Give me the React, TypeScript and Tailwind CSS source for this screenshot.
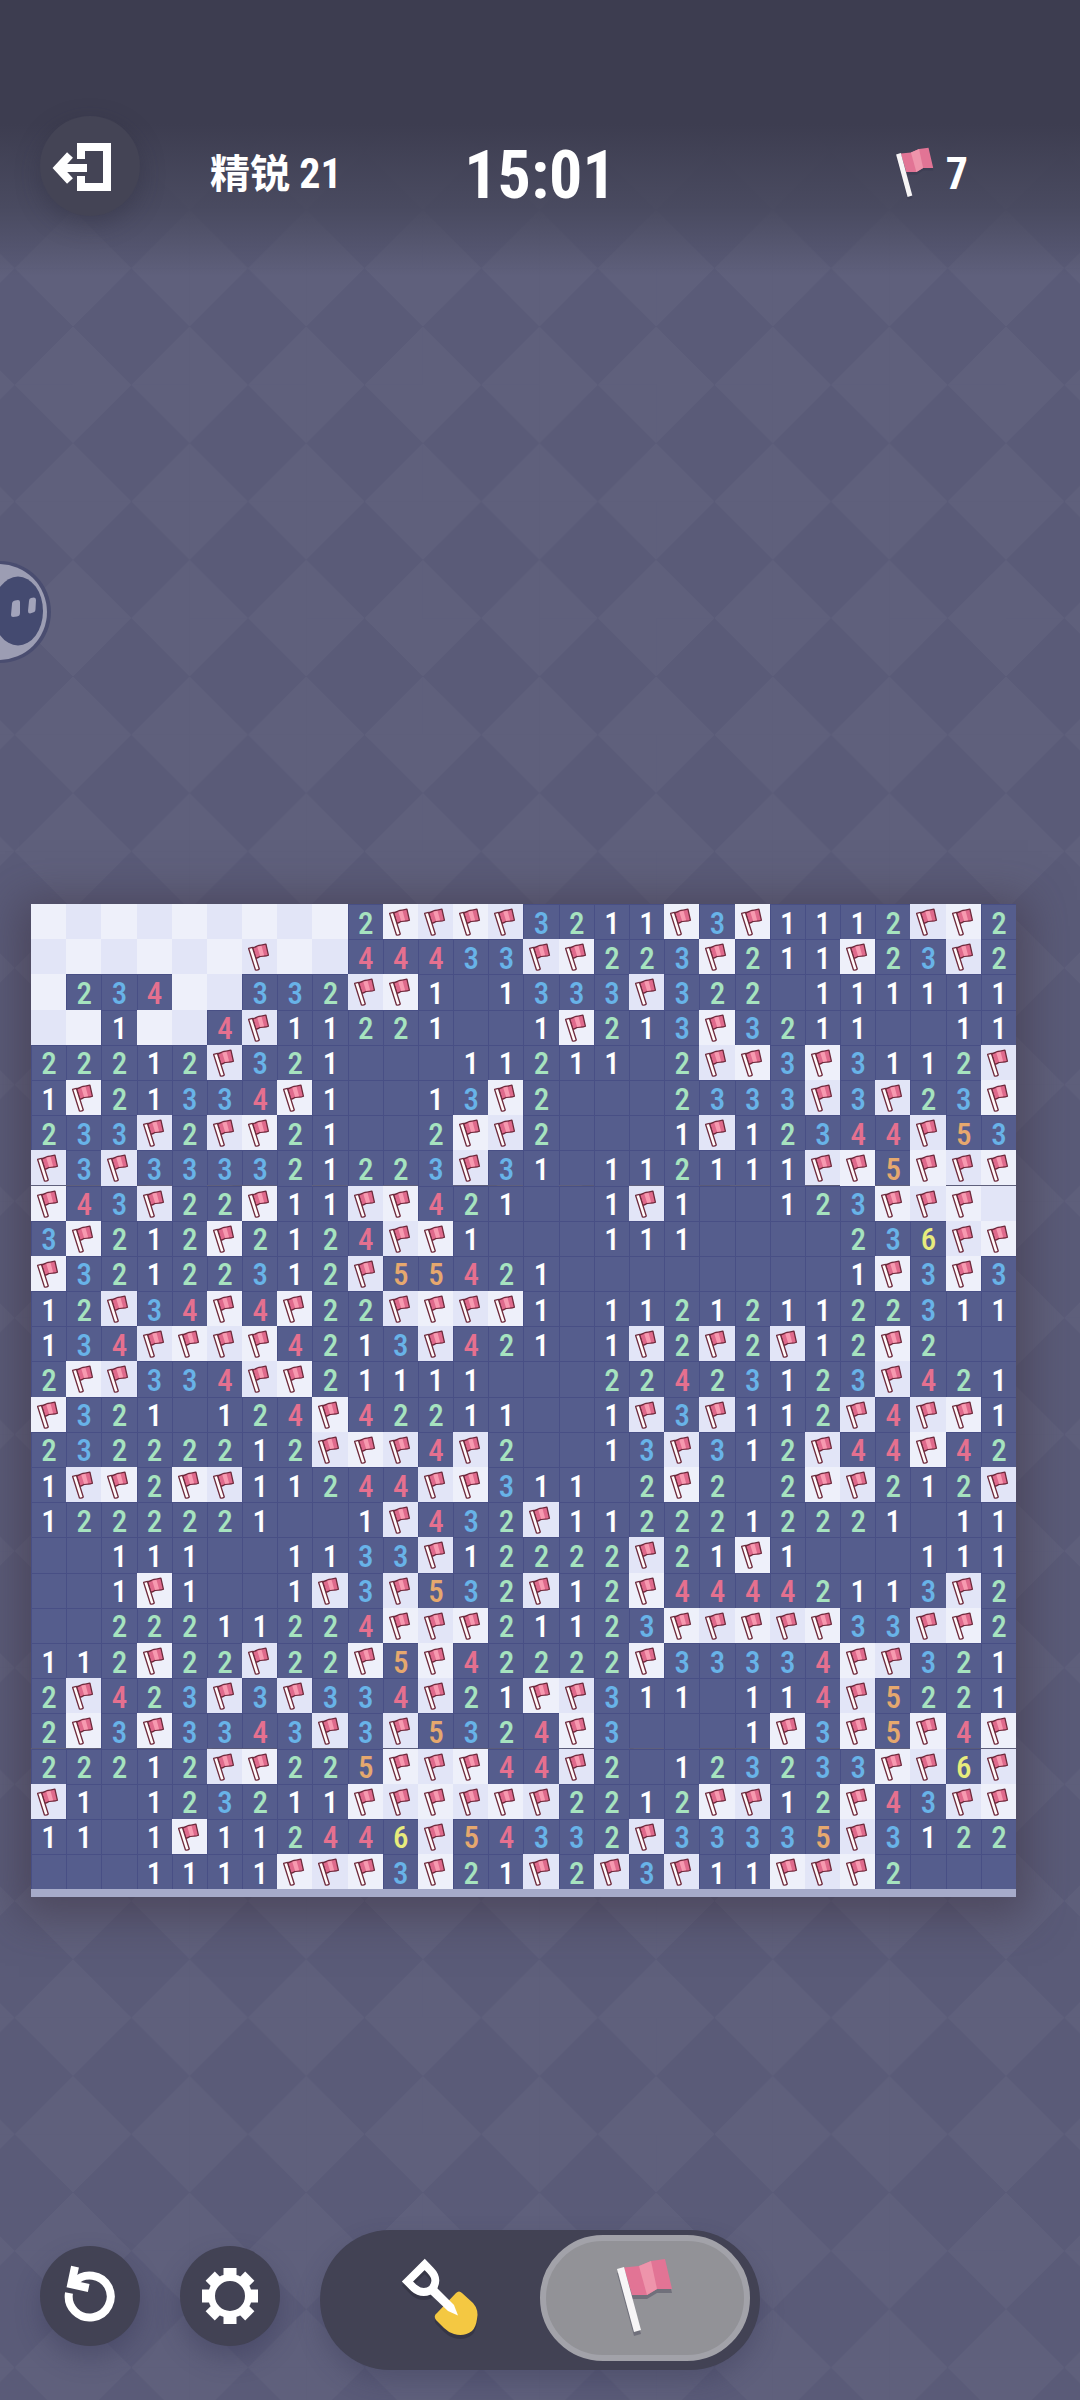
import { useState } from "react";

// "." covered, "F" flagged, "_" open and empty, digits are neighbour counts.
const ROWS: string[] = [
  ".........2FFFF3211F3F1112FF2",
  "......F..44433FF223F211F23F2",
  ".234..332FF1_1333F322_111111",
  "..1..4F11221__1F213F3211__11",
  "22212F321___11211_2FF3F3112F",
  "1F21334F1__13F2___2333F3F23F",
  "233F2FF21__2FF2___1F12344F53",
  "F3F333321223F31_112111FF5FFF",
  "F43F22F11FF421__1F1__123FFF.",
  "3F212F2124FF1___111____236FF",
  "F32122312F55421________1F3F3",
  "12F34F4F22FFFF1_112121122311",
  "134FFFF4213F421_1F2F2F12F2__",
  "2FF334FF21111___22423123F421",
  "F321_124F42211__1F3F112F4FF1",
  "23222212FFF4F2__13F312F44F42",
  "1FF2FF11244FF311_2F2_2FF212F",
  "1222221__1F432F1122212221_11",
  "__111__1133F12222F21F1___111",
  "__1F1__1F3F532F12F44442113F2",
  "__22211224FFF21123FFFFF33FF2",
  "112F22F22F5F42222F33334FF321",
  "2F423F3F334F21FF311_114F5221",
  "2F3F3343F3F5324F3___1F3F5F4F",
  "22212FF225FFF44F2_123233FF6F",
  "F1_123211FFFFFF2212FF12F43FF",
  "11_1F112446F54332F33335F3122",
  "___1111FFF3F21F2F3F11FFF2___",
];

const DIGIT_COLORS: Record<string, string> = {
  "1": "text-white",
  "2": "text-[#a6e3bf]",
  "3": "text-[#68b3e8]",
  "4": "text-[#e5708f]",
  "5": "text-[#e6a86e]",
  "6": "text-[#e8ec7c]",
};

function CellFlag() {
  return (
    <svg viewBox="0 0 35 35" className="block size-full" aria-hidden="true">
      <g stroke="#6e2a3c" strokeWidth="1.3" strokeLinejoin="round">
        <path d="M10.5 8.5 C14 8.5 15 6 19 6 C21 6 22.5 5.6 23.8 5.2 L26.3 16.2 C23 17.8 21 16.6 18.5 17.4 C16.5 18 15.5 19 13.5 19.2 Z" fill="#df6a8c" />
        <path d="M6.6 9.4 L10.4 8.4 L17.2 29.8 Q15.6 31.4 13.4 30.8 Z" fill="#fffafa" />
      </g>
      <path d="M15.2 7.6 L19.4 6.6 L22 16.2 L18 16.9 Z" fill="#f79ab0" />
    </svg>
  );
}

function Flag({ className }: { className: string }) {
  return (
    <svg viewBox="0 0 56 80" className={className} aria-hidden="true">
      <g fill="#33334a" opacity="0.35" transform="translate(0 4)">
        <path d="M0 11 L7 9 L24 72 L17 74 Z" />
        <path d="M8 10 L22 8 L34 3 L48 1 L55 31 L40 31 L30 37 L15 37 Z" />
      </g>
      <path d="M7 9.500 L22 8 L34 3 L48 1 L55 31 L40 31 L30 37 L15 37 Z" fill="#e27495" />
      <path d="M22 8 L34 3 L40 31 L30 37 Z" fill="#ee94ab" />
      <path d="M0 11 L7 9 L24 72 L17 74 Z" fill="#f7f5f6" />
    </svg>
  );
}

function Shovel() {
  return (
    <svg viewBox="0 0 84 84" className="block size-[84px]" aria-hidden="true">
      <g transform="translate(-76 -26)">
        <g opacity="0.35" transform="translate(0 4)" fill="#22222e">
          <path d="M134 63 Q137 60 140 63 L151 73 Q157 80 155 89 Q154 97 150 101 Q142 107 132 104 Q126 102 122 98 L114 90 Q111 86 115 83 Z" />
          <path d="M85.500 51.500 L102.700 34.500 L108.500 40.500 C115 47 114 54 110.500 58.500 C106 63 98 63.500 92 58 Z" fill="none" stroke="#22222e" strokeWidth="8" />
        </g>
        <path d="M134 63 Q137 60 140 63 L151 73 Q157 80 155 89 Q154 97 150 101 Q142 107 132 104 Q126 102 122 98 L114 90 Q111 86 115 83 Z" fill="#f4c842" />
        <path d="M85.500 51.500 L102.700 34.500 L108.500 40.500 C115 47 114 54 110.500 58.500 C106 63 98 63.500 92 58 Z" fill="none" stroke="#fff" strokeWidth="8" />
        <path d="M108 64 L114 57 L132 75 L136 85.500 L126 81 Z" fill="#fff" />
      </g>
    </svg>
  );
}

function Cell({ value, row, col }: { value: string; row: number; col: number }) {
  const covered = value === "." || value === "F";
  const shade = (row + col) % 2 === 0 ? "bg-[#eef0fa]" : "bg-[#e2e5f7]";
  const name =
    value === "F" ? "flag" : value === "." ? "covered" : value === "_" ? "empty" : value;
  return (
    <button
      type="button"
      aria-label={`${row + 1}-${col + 1} ${name}`}
      className={
        covered
          ? `flex aspect-square min-h-0 min-w-0 items-center justify-center ${shade}`
          : `flex aspect-square min-h-0 min-w-0 items-center justify-center border-t border-l border-[#484f85] bg-[#555d8d] pt-[3px] text-[31px] leading-7 font-medium ${DIGIT_COLORS[value] ?? ""}`
      }
    >
      {value === "F" ? <CellFlag /> : covered || value === "_" ? null : value}
    </button>
  );
}

export default function App() {
  const [tool, setTool] = useState<"dig" | "flag">("flag");
  const round =
    "flex size-[100px] items-center justify-center rounded-full bg-[#424254] shadow-[0_12px_24px_rgba(50,50,80,0.35)]";
  const toolBase = "flex h-[126px] items-center justify-center rounded-full border-[6px]";
  const toolOn = "border-[#a2a2a9] bg-[#929297]";
  const toolOff = "border-transparent";

  return (
    <div className="relative flex min-h-screen flex-col overflow-hidden bg-[#5a5b78] bg-[linear-gradient(45deg,#5f607c_25%,transparent_25%,transparent_75%,#5f607c_75%),linear-gradient(-45deg,#5f607c_25%,transparent_25%,transparent_75%,#5f607c_75%)] bg-size-[10.8vw_10.8vw] bg-position-[73px_35px] font-['Roboto_Condensed','Liberation_Sans_Narrow',Roboto,'Noto_Sans_CJK_SC',sans-serif] text-white">
      <header className="bg-linear-to-b from-[#3d3d50] from-45% via-[#45465a]/80 via-75% to-transparent pt-[116px] pb-[60px]">
        <div className="grid grid-cols-[minmax(0,1fr)_auto_minmax(0,1fr)] items-center">
          <div className="flex items-center gap-[70px] pl-10">
            <button
              type="button"
              aria-label="退出"
              className="size-[100px] shrink-0 rounded-full bg-[#444455] shadow-[0_8px_24px_rgba(40,40,56,0.35)]"
            >
              <svg viewBox="0 0 100 100" fill="none" stroke="#fff" strokeWidth="8" className="block size-full">
                <path d="M41 43 V31 H67 V71 H41 V60" />
                <path d="M30 39 L18 52 L30 65 M19 52 H47" />
              </svg>
            </button>
            <h1 className="pt-4 text-[40px] leading-none font-bold whitespace-nowrap">
              精锐 <span className="text-[42px]">21</span>
            </h1>
          </div>
          <time className="pt-5 text-[66px] leading-none font-bold">15:01</time>
          <div className="flex items-center justify-end gap-3 pt-4 pr-28 text-[44px] leading-none font-bold">
            <Flag className="h-[54px] w-[38px]" />
            <span>7</span>
          </div>
        </div>
      </header>

      <button type="button" aria-label="助手" className="absolute top-[561px] left-0 h-[102px] w-[51px]">
        <svg viewBox="0 0 51 102" className="block size-full">
          <circle cx="0" cy="51" r="51" fill="#4a4d70" />
          <circle cx="-1" cy="51" r="48" fill="#9c9db3" />
          <ellipse cx="18" cy="50" rx="25" ry="34.500" fill="#444a70" />
          <path d="M12 43 Q12 40 15 39.500 L18 39 Q20 39 20 41 V52 Q20 55 17 55.500 L13 56 Q11 56 11 54 Z" fill="#a2a3ba" />
          <path d="M29 40 Q29 37.500 31 37 L34 36.500 Q36 36.500 36 39 L35.500 48 Q35.500 51 33 51.500 L30 52.500 Q28 52.500 28 50 Z" fill="#a2a3ba" />
        </svg>
      </button>

      <main className="mt-[628px] mr-16 ml-[31px] border-b-8 border-[#a6abca] shadow-[0_8px_40px_12px_rgba(60,50,66,0.5)]">
        <div className="grid grid-cols-[repeat(28,minmax(0,1fr))]">
          {ROWS.map((cells, row) =>
            cells.split("").map((value, col) => (
              <Cell key={`${row}-${col}`} value={value} row={row} col={col} />
            )),
          )}
        </div>
      </main>

      <footer className="mt-auto flex items-center gap-10 px-10 pb-[30px]">
        <button type="button" aria-label="重新开始" className={`${round} -mt-2`}>
          <svg viewBox="0 0 100 100" fill="none" stroke="#fff" strokeWidth="8" className="block size-full">
            <path d="M29 47 A21 21 0 1 0 34.500 36" />
            <path d="M35 20.700 L31.300 38.200 L48.700 42" />
          </svg>
        </button>
        <button type="button" aria-label="设置" className={`${round} -mt-2`}>
          <svg viewBox="0 0 100 100" className="block size-full">
            <circle cx="50" cy="50" r="18.500" fill="none" stroke="#fff" strokeWidth="7" />
            {[0, 45, 90, 135, 180, 225, 270, 315].map((angle) => (
              <rect key={angle} x="43.500" y="22" width="13" height="10" fill="#fff" transform={`rotate(${angle} 50 50)`} />
            ))}
          </svg>
        </button>
        <div
          role="group"
          aria-label="工具"
          className="flex rounded-full bg-[#424254] pt-[5px] pr-[10px] pb-[9px] pl-5 shadow-[0_12px_24px_rgba(50,50,80,0.3)]"
        >
          <button
            type="button"
            aria-label="铲子"
            aria-pressed={tool === "dig"}
            onClick={() => setTool("dig")}
            className={`${toolBase} w-[200px] ${tool === "dig" ? toolOn : toolOff}`}
          >
            <Shovel />
          </button>
          <button
            type="button"
            aria-label="旗帜"
            aria-pressed={tool === "flag"}
            onClick={() => setTool("flag")}
            className={`${toolBase} w-[210px] ${tool === "flag" ? toolOn : toolOff}`}
          >
            <Flag className="h-20 w-14" />
          </button>
        </div>
      </footer>
    </div>
  );
}
